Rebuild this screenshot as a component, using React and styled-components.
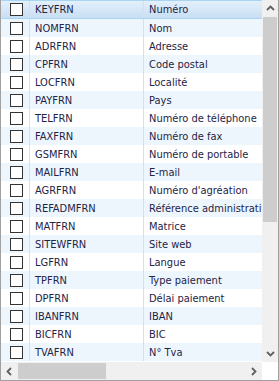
import React from 'react';
import styled, { createGlobalStyle } from 'styled-components';

const GlobalStyle = createGlobalStyle`
  html, body {
    margin: 0;
    padding: 0;
    background: #ffffff;
  }
`

const rows = [
    ['KEYFRN', 'Numéro'],
    ['NOMFRN', 'Nom'],
    ['ADRFRN', 'Adresse'],
    ['CPFRN', 'Code postal'],
    ['LOCFRN', 'Localité'],
    ['PAYFRN', 'Pays'],
    ['TELFRN', 'Numéro de téléphone'],
    ['FAXFRN', 'Numéro de fax'],
    ['GSMFRN', 'Numéro de portable'],
    ['MAILFRN', 'E-mail'],
    ['AGRFRN', "Numéro d'agréation"],
    ['REFADMFRN', 'Référence administrative'],
    ['MATFRN', 'Matrice'],
    ['SITEWFRN', 'Site web'],
    ['LGFRN', 'Langue'],
    ['TPFRN', 'Type paiement'],
    ['DPFRN', 'Délai paiement'],
    ['IBANFRN', 'IBAN'],
    ['BICFRN', 'BIC'],
    ['TVAFRN', 'N° Tva'],
]

const Frame = styled.div`
  width: 279px;
  height: 381px;
  box-sizing: border-box;
  border: 1px solid #a0a0a0;
  border-top: none;
  display: grid;
  grid-template-columns: 1fr 16px;
  grid-template-rows: 1fr 18px;
  background: #ffffff;
  overflow: hidden;
  font-family: "DejaVu Sans Condensed", "DejaVu Sans", sans-serif;
  font-size: 11px;
  color: #1e2446;
`

const Grid = styled.div`
  overflow: hidden;
  padding-top: 1px;
`

const Row = styled.div`
  display: grid;
  grid-template-columns: 29px 114px 200px;
  height: 18px;
  box-sizing: border-box;
  background: ${p => p.$selected ? 'linear-gradient(#e3f0fb, #c8def3)' : p.$alt ? '#eef6fd' : '#ffffff'};
  border-top: ${p => p.$selected ? '1px solid #a8d6f2' : 'none'};
  border-bottom: ${p => p.$selected ? '1px solid #a8d6f2' : 'none'};
  margin-top: ${p => p.$selected ? '-1px' : '0'};
  height: ${p => p.$selected ? '19px' : '18px'};
`

const CheckCell = styled.div`
  display: flex;
  align-items: center;
  padding-left: 9px;
  border-right: 1px solid #dadfe6;
`

const Box = styled.span`
  width: 13px;
  height: 13px;
  box-sizing: border-box;
  border: 1px solid #333333;
  background: #ffffff;
`

const Cell = styled.div`
  display: flex;
  align-items: center;
  padding-left: ${p => p.$pad}px;
  white-space: nowrap;
  overflow: hidden;
  border-right: ${p => p.$line ? '1px solid #dadfe6' : 'none'};
`

const VScroll = styled.div`
  background: #f0f0f0;
  display: flex;
  flex-direction: column;
`

const HScroll = styled.div`
  background: #f0f0f0;
  display: flex;
  align-items: stretch;
`

const Arrow = styled.div`
  flex: 0 0 17px;
  display: flex;
  align-items: center;
  justify-content: center;
`

const VThumb = styled.div`
  height: 205px;
  margin: 0 1px;
  background: #cdcdcd;
`

const HThumb = styled.div`
  width: 88px;
  margin: 1px 0;
  background: #cdcdcd;
`

const Spacer = styled.div`
  flex: 1;
`

const Corner = styled.div`
  background: #ffffff;
`

function Chevron({dir}) {
    const pts = {
        up: '1,6 4.5,2.5 8,6',
        down: '1,3 4.5,6.5 8,3',
        left: '6,1 2.5,4.5 6,8',
        right: '3,1 6.5,4.5 3,8',
    }[dir]
    return (
        <svg width="9" height="9" viewBox="0 0 9 9">
            <polyline points={pts} fill="none" stroke="#606060" strokeWidth="1.8"/>
        </svg>
    )
}

export default function App() {
    return (
        <>
            <GlobalStyle/>
            <Frame>
                <Grid>
                    {rows.map(([code, label], i) => (
                        <Row key={code} $selected={i === 0} $alt={i % 2 === 1}>
                            <CheckCell><Box/></CheckCell>
                            <Cell $pad={5} $line>{code}</Cell>
                            <Cell $pad={5}>{label}</Cell>
                        </Row>
                    ))}
                </Grid>
                <VScroll>
                    <Arrow><Chevron dir="up"/></Arrow>
                    <VThumb/>
                    <Spacer/>
                    <Arrow><Chevron dir="down"/></Arrow>
                </VScroll>
                <HScroll>
                    <Arrow><Chevron dir="left"/></Arrow>
                    <HThumb/>
                    <Spacer/>
                    <Arrow><Chevron dir="right"/></Arrow>
                </HScroll>
                <Corner/>
            </Frame>
        </>
    )
}
